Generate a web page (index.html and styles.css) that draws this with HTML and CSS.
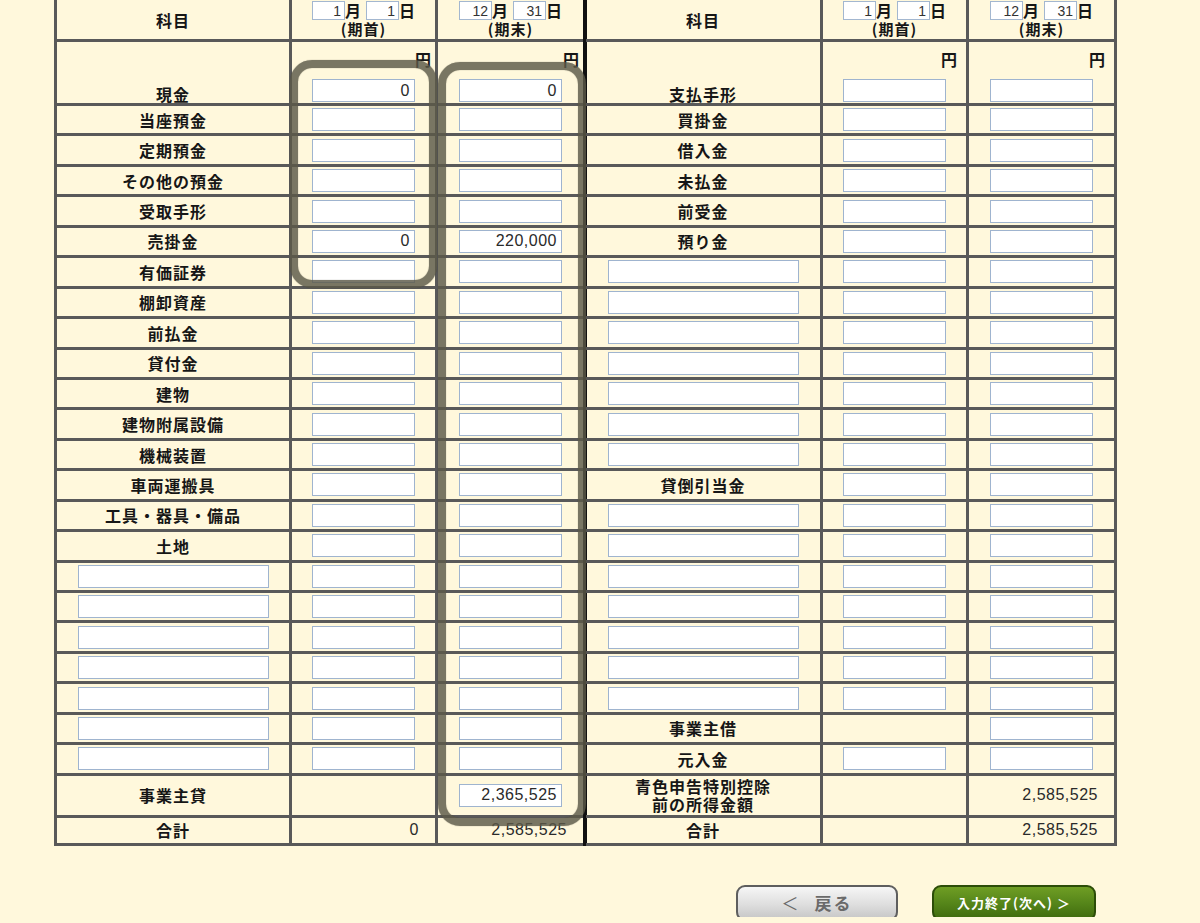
FILE: index.html
```html
<!DOCTYPE html>
<html lang="ja">
<head>
<meta charset="utf-8">
<title>貸借対照表</title>
<link rel="stylesheet" href="styles.css">
</head>
<body>
<div class="page">
  <div class="sheet">
    <div class="bs">
      <!-- header -->
      <div class="c lbl head-l">科目</div>
      <div class="c hd"><div class="dt"><input class="d" value="1"><span class="u">月</span><input class="d" value="1"><span>日</span></div><div class="per">(期首)</div></div>
      <div class="c hd"><div class="dt"><input class="d" value="12"><span class="u">月</span><input class="d" value="31"><span>日</span></div><div class="per">(期末)</div></div>
      <div class="c lbl head-l">科目</div>
      <div class="c hd"><div class="dt"><input class="d" value="1"><span class="u">月</span><input class="d" value="1"><span>日</span></div><div class="per">(期首)</div></div>
      <div class="c hd"><div class="dt"><input class="d" value="12"><span class="u">月</span><input class="d" value="31"><span>日</span></div><div class="per">(期末)</div></div>

      <!-- 現金 / 支払手形 -->
      <div class="c lbl bot">現金</div>
      <div class="c yen"><span class="en">円</span><input class="in" value="0"></div>
      <div class="c yen"><span class="en">円</span><input class="in" value="0"></div>
      <div class="c lbl bot">支払手形</div>
      <div class="c yen wide"><span class="en">円</span><input class="in"></div>
      <div class="c yen wide"><span class="en">円</span><input class="in"></div>

      <div class="c lbl">当座預金</div><div class="c"><input class="in"></div><div class="c"><input class="in"></div>
      <div class="c lbl">買掛金</div><div class="c"><input class="in"></div><div class="c"><input class="in"></div>

      <div class="c lbl">定期預金</div><div class="c"><input class="in"></div><div class="c"><input class="in"></div>
      <div class="c lbl">借入金</div><div class="c"><input class="in"></div><div class="c"><input class="in"></div>

      <div class="c lbl">その他の預金</div><div class="c"><input class="in"></div><div class="c"><input class="in"></div>
      <div class="c lbl">未払金</div><div class="c"><input class="in"></div><div class="c"><input class="in"></div>

      <div class="c lbl">受取手形</div><div class="c"><input class="in"></div><div class="c"><input class="in"></div>
      <div class="c lbl">前受金</div><div class="c"><input class="in"></div><div class="c"><input class="in"></div>

      <div class="c lbl">売掛金</div><div class="c"><input class="in" value="0"></div><div class="c"><input class="in" value="220,000"></div>
      <div class="c lbl">預り金</div><div class="c"><input class="in"></div><div class="c"><input class="in"></div>

      <div class="c lbl">有価証券</div><div class="c"><input class="in"></div><div class="c"><input class="in"></div>
      <div class="c"><input class="tx"></div><div class="c"><input class="in"></div><div class="c"><input class="in"></div>

      <div class="c lbl">棚卸資産</div><div class="c"><input class="in"></div><div class="c"><input class="in"></div>
      <div class="c"><input class="tx"></div><div class="c"><input class="in"></div><div class="c"><input class="in"></div>

      <div class="c lbl">前払金</div><div class="c"><input class="in"></div><div class="c"><input class="in"></div>
      <div class="c"><input class="tx"></div><div class="c"><input class="in"></div><div class="c"><input class="in"></div>

      <div class="c lbl">貸付金</div><div class="c"><input class="in"></div><div class="c"><input class="in"></div>
      <div class="c"><input class="tx"></div><div class="c"><input class="in"></div><div class="c"><input class="in"></div>

      <div class="c lbl">建物</div><div class="c"><input class="in"></div><div class="c"><input class="in"></div>
      <div class="c"><input class="tx"></div><div class="c"><input class="in"></div><div class="c"><input class="in"></div>

      <div class="c lbl">建物附属設備</div><div class="c"><input class="in"></div><div class="c"><input class="in"></div>
      <div class="c"><input class="tx"></div><div class="c"><input class="in"></div><div class="c"><input class="in"></div>

      <div class="c lbl">機械装置</div><div class="c"><input class="in"></div><div class="c"><input class="in"></div>
      <div class="c"><input class="tx"></div><div class="c"><input class="in"></div><div class="c"><input class="in"></div>

      <div class="c lbl">車両運搬具</div><div class="c"><input class="in"></div><div class="c"><input class="in"></div>
      <div class="c lbl">貸倒引当金</div><div class="c"><input class="in"></div><div class="c"><input class="in"></div>

      <div class="c lbl">工具・器具・備品</div><div class="c"><input class="in"></div><div class="c"><input class="in"></div>
      <div class="c"><input class="tx"></div><div class="c"><input class="in"></div><div class="c"><input class="in"></div>

      <div class="c lbl">土地</div><div class="c"><input class="in"></div><div class="c"><input class="in"></div>
      <div class="c"><input class="tx"></div><div class="c"><input class="in"></div><div class="c"><input class="in"></div>

      <div class="c"><input class="tx"></div><div class="c"><input class="in"></div><div class="c"><input class="in"></div>
      <div class="c"><input class="tx"></div><div class="c"><input class="in"></div><div class="c"><input class="in"></div>

      <div class="c"><input class="tx"></div><div class="c"><input class="in"></div><div class="c"><input class="in"></div>
      <div class="c"><input class="tx"></div><div class="c"><input class="in"></div><div class="c"><input class="in"></div>

      <div class="c"><input class="tx"></div><div class="c"><input class="in"></div><div class="c"><input class="in"></div>
      <div class="c"><input class="tx"></div><div class="c"><input class="in"></div><div class="c"><input class="in"></div>

      <div class="c"><input class="tx"></div><div class="c"><input class="in"></div><div class="c"><input class="in"></div>
      <div class="c"><input class="tx"></div><div class="c"><input class="in"></div><div class="c"><input class="in"></div>

      <div class="c"><input class="tx"></div><div class="c"><input class="in"></div><div class="c"><input class="in"></div>
      <div class="c"><input class="tx"></div><div class="c"><input class="in"></div><div class="c"><input class="in"></div>

      <div class="c"><input class="tx"></div><div class="c"><input class="in"></div><div class="c"><input class="in"></div>
      <div class="c lbl">事業主借</div><div class="c"></div><div class="c"><input class="in"></div>

      <div class="c"><input class="tx"></div><div class="c"><input class="in"></div><div class="c"><input class="in"></div>
      <div class="c lbl">元入金</div><div class="c"><input class="in"></div><div class="c"><input class="in"></div>

      <!-- 事業主貸 / 青色申告特別控除前の所得金額 -->
      <div class="c lbl">事業主貸</div>
      <div class="c"></div>
      <div class="c"><input class="in" value="2,365,525"></div>
      <div class="c lbl two"><span>青色申告特別控除</span><span>前の所得金額</span></div>
      <div class="c"></div>
      <div class="c tot">2,585,525</div>

      <!-- 合計 -->
      <div class="c lbl">合計</div>
      <div class="c tot">0</div>
      <div class="c tot">2,585,525</div>
      <div class="c lbl">合計</div>
      <div class="c"></div>
      <div class="c tot">2,585,525</div>
    </div>
    <div class="mark mark-a"></div>
    <div class="mark mark-b"></div>
  </div>

  <div class="actions">
    <button class="btn back"><span class="lt">＜</span>戻る</button>
    <button class="btn next">入力終了(次へ) ＞</button>
  </div>
</div>
</body>
</html>
```

FILE: styles.css
```css
* {
  box-sizing: border-box;
}

body {
  margin: 0;
  background: #fff8dc;
  font-family: "Noto Sans CJK JP", "Noto Sans", sans-serif;
  color: #161616;
  overflow: hidden;
}

.page {
  width: 1200px;
  height: 923px;
}

.sheet {
  position: relative;
  width: 1063px;
  margin: -6px 0 0 54px;
}

.bs {
  display: grid;
  grid-template-columns: 232px 143px 145px 234px 143px 145px;
  grid-template-rows: 42px 61px repeat(22, 27.45px) 39px 25px;
  gap: 3px;
  padding: 3px;
  background: linear-gradient(to right, #595959 0, #595959 529px, #111 529px, #111 532px, #595959 532px);
}

.c {
  background: #fff8dc;
  display: flex;
  align-items: center;
  justify-content: center;
  min-width: 0;
}

.c:nth-child(6n+4) {
  box-shadow: inset 1px 0 0 #111;
}

.lbl {
  font-size: 16px;
  font-weight: 700;
  letter-spacing: 1px;
  line-height: 18px;
  white-space: nowrap;
}

.head-l {
  padding-top: 4px;
}

.bot {
  align-items: flex-end;
  padding-bottom: 0;
}

.two {
  flex-direction: column;
  line-height: 18px;
}

.hd {
  flex-direction: column;
  justify-content: flex-start;
  padding-top: 4px;
  font-size: 16px;
  font-weight: 700;
  line-height: 19px;
}

.dt {
  display: flex;
  align-items: center;
  height: 19px;
  line-height: 17px;
}

.dt .u {
  margin-right: 5px;
}

.d {
  width: 33px;
  height: 19px;
  border: 1px solid #a3b7d0;
  background: #fff;
  font: 14px "Liberation Sans", sans-serif;
  text-align: right;
  padding: 0 3px;
  color: #333;
}

.per {
  font-size: 15px;
  letter-spacing: 1px;
  line-height: 18px;
}

.yen {
  flex-direction: column;
  align-items: center;
  justify-content: space-between;
  padding: 8px 0 1px;
}

.en {
  align-self: flex-end;
  padding-right: 4px;
  font-size: 16px;
  font-weight: 700;
  line-height: 18px;
}

.wide .en {
  padding-right: 9px;
}

.in,
.tx {
  height: 23px;
  border: 1px solid #9fb4cf;
  background: #fff;
  font: 16px "Liberation Sans", sans-serif;
  letter-spacing: 0.5px;
  color: #2a2a2a;
  padding: 0 4px;
  margin: 0;
}

.in {
  width: 103px;
  text-align: right;
}

.tx {
  width: 191px;
}

.tot {
  justify-content: flex-end;
  padding-right: 16px;
  font: 16px "Liberation Sans", sans-serif;
  letter-spacing: 0.5px;
  color: #2a2a2a;
}

.mark {
  position: absolute;
  border: 8px solid rgba(92, 89, 72, 0.82);
  border-radius: 22px;
  box-shadow: 0 0 1px rgba(40, 40, 30, 0.6), inset 0 0 1px rgba(40, 40, 30, 0.6);
  pointer-events: none;
}

.mark-a {
  left: 236px;
  top: 66px;
  width: 147px;
  height: 228px;
}

.mark-b {
  left: 384px;
  top: 68px;
  width: 148px;
  height: 764px;
}

.actions {
  display: flex;
  justify-content: flex-end;
  gap: 34px;
  margin-top: 39px;
  padding-right: 104px;
}

.btn {
  height: 36px;
  border-radius: 9px;
  font-family: "Noto Sans CJK JP", sans-serif;
  font-weight: 700;
  display: flex;
  align-items: center;
  justify-content: center;
  padding: 0;
}

.back {
  width: 162px;
  border: 2px solid #5e5e5e;
  background: linear-gradient(#f6f6f6, #dedede 55%, #c6c6c6);
  color: #6a6a6a;
  font-size: 17px;
  letter-spacing: 2px;
}

.back .lt {
  font-weight: 400;
  margin-right: 14px;
}

.next {
  width: 164px;
  border: 2px solid #2c4d08;
  background: linear-gradient(#6f9e24, #56861a 50%, #3f6a0e);
  color: #fff;
  font-size: 13px;
  letter-spacing: 1px;
}
```
